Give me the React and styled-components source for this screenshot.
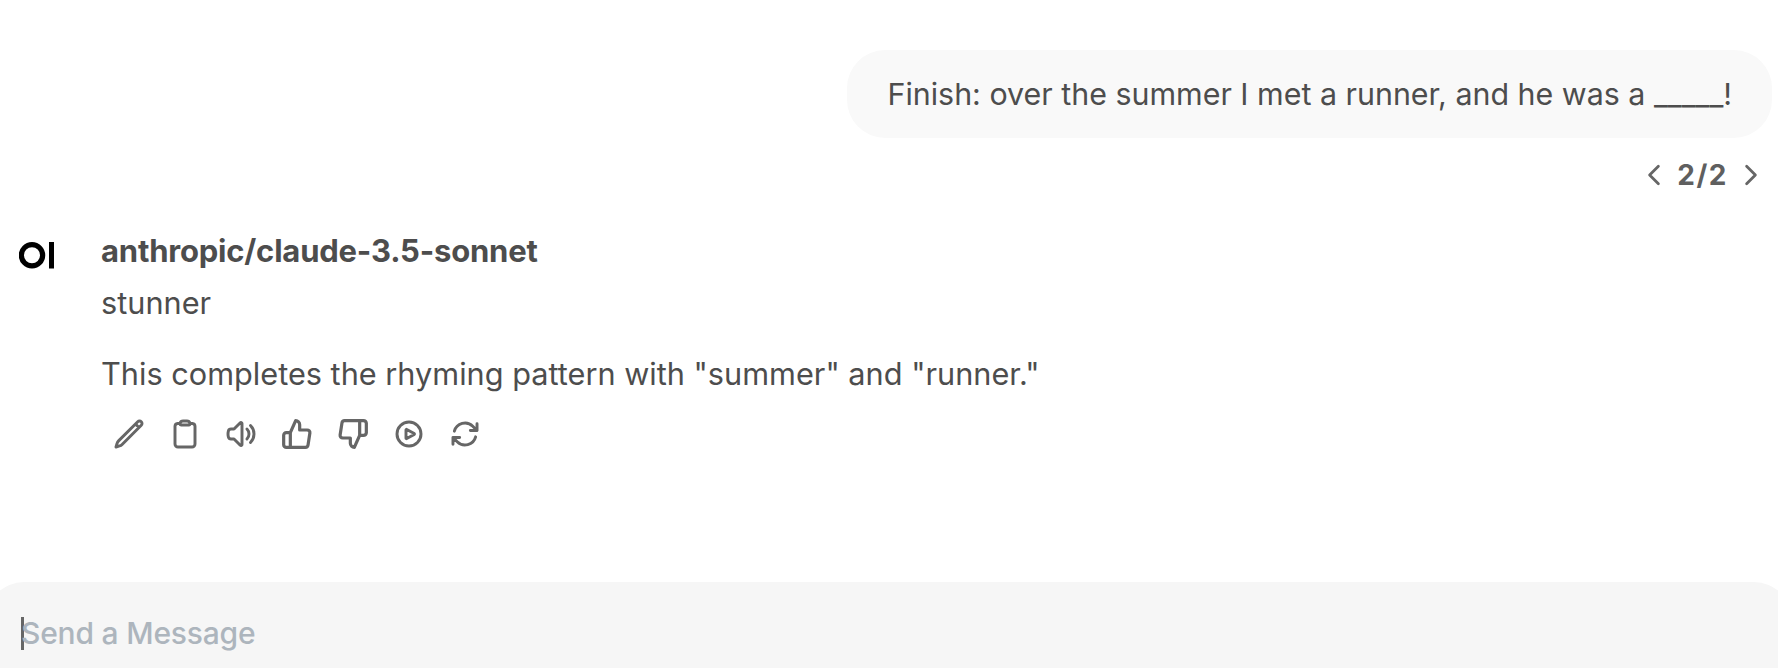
import React from "react";
import styled, { createGlobalStyle } from "styled-components";

const GlobalStyle = createGlobalStyle`
    html, body {
        margin: 0;
        padding: 0;
        background: #fff;
        overflow: hidden;
    }
`;

const Page = styled.div`
    width: 1778px;
    height: 668px;
    display: flex;
    flex-direction: column;
    overflow: hidden;
    font-family: Inter, "Liberation Sans", sans-serif;
    color: #4d4d4d;
`;

const Thread = styled.div`
    flex: 1;
    padding-top: 50px;
    display: flex;
    flex-direction: column;
`;

const UserRow = styled.div`
    display: flex;
    justify-content: flex-end;
    padding-right: 6px;
`;

const Bubble = styled.div`
    height: 88px;
    padding: 0 40px;
    display: flex;
    align-items: center;
    background: #f9f9f9;
    border-radius: 38px;
    font-size: 30.4px;
    white-space: nowrap;
`;

const Pager = styled.div`
    margin-top: 20px;
    padding-right: 13px;
    display: flex;
    justify-content: flex-end;
    align-items: center;
    gap: 9px;
    height: 34px;
    color: #5f5f5f;
`;

const PagerLabel = styled.span`
    font-size: 28px;
    font-weight: 700;
    letter-spacing: 1.5px;
`;

const Reply = styled.div`
    margin-top: 20px;
    padding-left: 19px;
    display: flex;
    gap: 46px;
`;

const Logo = styled.svg`
    flex: none;
    width: 36px;
    height: 27px;
    margin-top: 30px;
`;

const ReplyBody = styled.div`
    padding-top: 8px;
    display: flex;
    flex-direction: column;
`;

const ModelName = styled.div`
    font-size: 31px;
    font-weight: 700;
    letter-spacing: -0.2px;
    line-height: 61px;
`;

const Line = styled.p`
    margin: ${(p) => p.$top || 0}px 0 0;
    font-size: 30.7px;
    line-height: 44px;
`;

const Actions = styled.div`
    margin-top: 22px;
    display: flex;
    gap: 24px;
    padding-left: 12px;
`;

const Icon = styled.svg`
    width: ${(p) => p.$size || 32}px;
    height: ${(p) => p.$size || 32}px;
    fill: none;
    stroke: #666;
    stroke-width: ${(p) => p.$weight || 2.2};
    stroke-linecap: round;
    stroke-linejoin: round;
`;

const Composer = styled.div`
    flex: none;
    box-sizing: border-box;
    height: 86px;
    margin: 0 -14px;
    padding: 16px 0 0 35px;
    display: flex;
    align-items: center;
    background: #f6f6f6;
    border-radius: 38px 38px 0 0;
`;

const Caret = styled.span`
    width: 3px;
    height: 33px;
    background: #666;
`;

const Placeholder = styled.span`
    font-size: 30px;
    font-weight: 500;
    letter-spacing: -0.2px;
    color: #adb5bd;
    margin-left: -3px;
`;

const ICONS = [
    {
        name: "edit",
        paths: [
            "m16.862 4.487 1.687-1.688a1.875 1.875 0 1 1 2.652 2.652L6.832 19.82a4.5 4.5 0 0 1-1.897 1.13l-2.685.8.8-2.685a4.5 4.5 0 0 1 1.13-1.897L16.863 4.487Zm0 0L19.5 7.125",
        ],
    },
    {
        name: "copy",
        paths: [
            "M15.666 3.888A2.25 2.25 0 0 0 13.5 2.25h-3c-1.03 0-1.9.693-2.166 1.638m7.332 0c.055.194.084.4.084.612v0a.75.75 0 0 1-.75.75H9a.75.75 0 0 1-.75-.75v0c0-.212.03-.418.084-.612m7.332 0c.646.049 1.288.11 1.927.184 1.1.128 1.907 1.077 1.907 2.185V19.5a2.25 2.25 0 0 1-2.25 2.25H6.75A2.25 2.25 0 0 1 4.5 19.5V6.257c0-1.108.806-2.057 1.907-2.185a48.208 48.208 0 0 1 1.927-.184",
        ],
    },
    {
        name: "speak",
        paths: [
            "M19.114 5.636a9 9 0 0 1 0 12.728M16.463 8.288a5.25 5.25 0 0 1 0 7.424M6.75 8.25l4.72-4.72a.75.75 0 0 1 1.28.53v15.88a.75.75 0 0 1-1.28.53l-4.72-4.72H4.51c-.88 0-1.704-.507-1.938-1.354A9.01 9.01 0 0 1 2.25 12c0-.83.112-1.633.322-2.396C2.806 8.756 3.63 8.25 4.51 8.25H6.75Z",
        ],
    },
    {
        name: "good",
        paths: ["M14 9V5a3 3 0 0 0-3-3l-4 9v11h11.28a2 2 0 0 0 2-1.7l1.38-9a2 2 0 0 0-2-2.3zM7 22H4a2 2 0 0 1-2-2v-7a2 2 0 0 1 2-2h3"],
        weight: 2.4,
    },
    {
        name: "bad",
        paths: ["M10 15v4a3 3 0 0 0 3 3l4-9V2H5.72a2 2 0 0 0-2 1.7l-1.38 9a2 2 0 0 0 2 2.3zm7-13h2.67A2.31 2.31 0 0 1 22 4v7a2.31 2.31 0 0 1-2.33 2H17"],
        weight: 2.4,
    },
    {
        name: "continue",
        paths: [
            "M21 12a9 9 0 1 1-18 0 9 9 0 0 1 18 0Z",
            "M15.91 11.672a.375.375 0 0 1 0 .656l-5.603 3.113a.375.375 0 0 1-.557-.328V8.887c0-.286.307-.466.557-.327l5.603 3.112Z",
        ],
    },
    {
        name: "regenerate",
        paths: [
            "M16.023 9.348h4.992v-.001M2.985 19.644v-4.992m0 0h4.992m-4.993 0 3.181 3.183a8.25 8.25 0 0 0 13.803-3.7M4.031 9.865a8.25 8.25 0 0 1 13.803-3.7l3.181 3.182m0-4.991v4.99",
        ],
    },
];

const App = () => (
    <Page>
        <GlobalStyle />
        <Thread>
            <UserRow>
                <Bubble>Finish: over the summer I met a runner, and he was a _____!</Bubble>
            </UserRow>
            <Pager>
                <Icon viewBox="0 0 24 24" $size={28} $weight={2.4}>
                    <path d="M15.75 19.5 8.25 12l7.5-7.5" />
                </Icon>
                <PagerLabel>2/2</PagerLabel>
                <Icon viewBox="0 0 24 24" $size={28} $weight={2.4}>
                    <path d="m8.25 4.5 7.5 7.5-7.5 7.5" />
                </Icon>
            </Pager>
            <Reply>
                <Logo viewBox="0 0 36 27">
                    <path
                        fillRule="evenodd"
                        d="M13 0a13 13 0 1 1 0 26.5A13 13 0 0 1 13 0Zm0 5.2a8 8 0 1 0 0 16.1a8 8 0 0 0 0-16.1Z"
                        fill="#000"
                    />
                    <rect x="30" y="0" width="5" height="26.5" fill="#000" />
                </Logo>
                <ReplyBody>
                    <ModelName>anthropic/claude-3.5-sonnet</ModelName>
                    <Line>stunner</Line>
                    <Line $top={27}>This completes the rhyming pattern with "summer" and "runner."</Line>
                    <Actions>
                        {ICONS.map((icon) => (
                            <Icon key={icon.name} viewBox="0 0 24 24" $weight={icon.weight}>
                                {icon.paths.map((d) => (
                                    <path key={d} d={d} />
                                ))}
                            </Icon>
                        ))}
                    </Actions>
                </ReplyBody>
            </Reply>
        </Thread>
        <Composer>
            <Caret />
            <Placeholder>Send a Message</Placeholder>
        </Composer>
    </Page>
);

export default App;
